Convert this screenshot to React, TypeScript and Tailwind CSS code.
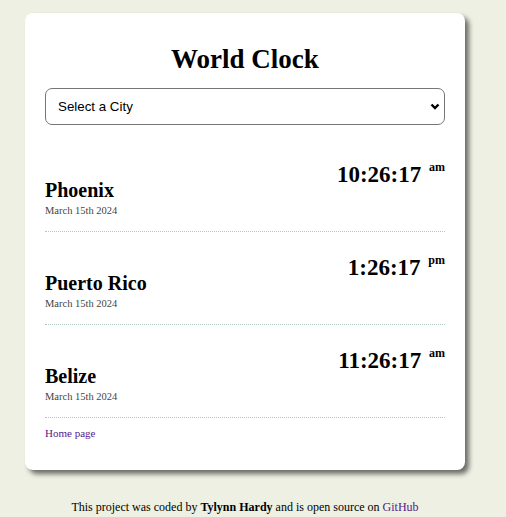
import React from 'react';

const cities = [
  { name: 'Phoenix', date: 'March 15th 2024', time: '10:26:17', period: 'am' },
  { name: 'Puerto Rico', date: 'March 15th 2024', time: '1:26:17', period: 'pm' },
  { name: 'Belize', date: 'March 15th 2024', time: '11:26:17', period: 'am' },
];

export default function App() {
  return (
    <div className="min-h-[517px] bg-[#edf0e2] pt-[13px] font-['Liberation_Serif',serif] text-black">
      <div className="ml-[25px] w-[440px] rounded-[8px] bg-white px-[20px] pb-[30px] pt-[30px] shadow-[4px_4px_5px_rgba(0,0,0,0.55)]">
        <h1 className="text-center text-[27px] font-bold leading-[32px]">World Clock</h1>
        <div className="relative mt-[13px] mb-[14px]">
          <select className="h-[37px] w-full appearance-none rounded-[7px] border border-[#767676] bg-white pl-[12px] font-['Liberation_Sans',Arial,sans-serif] text-[13.33px] text-black">
            <option>Select a City</option>
          </select>
          <svg
            className="pointer-events-none absolute right-[5px] top-[15px]"
            width="10"
            height="8"
            viewBox="0 0 10 8"
            fill="none"
          >
            <path d="M1.5 1.5 L5 5 L8.5 1.5" stroke="#000" strokeWidth="2.4" />
          </svg>
        </div>

        {cities.map((city) => (
          <div
            key={city.name}
            className="flex items-start justify-between border-b border-dotted border-[#b3c9c0] pt-[24px] pb-[13px]"
          >
            <div className="mt-[15px]">
              <h2 className="text-[20px] font-bold leading-[24px]">{city.name}</h2>
              <div className="mt-[2px] text-[10.5px] leading-[14px] text-[#444]">{city.date}</div>
            </div>
            <div className="text-[23px] font-bold leading-[24px]">
              {city.time}{' '}
              <sup className="relative top-[-2px] ml-[2px] align-super text-[12px]">{city.period}</sup>
            </div>
          </div>
        ))}

        <a href="#" className="mt-[8px] block text-[11px] leading-[14px] text-[#551a8b]">
          Home page
        </a>
      </div>

      <p className="mt-[29px] ml-[25px] w-[440px] text-center text-[12px] leading-[16px]">
        This project was coded by <strong>Tylynn Hardy</strong> and is open source on{' '}
        <a href="#" className="text-[#551a8b]">
          GitHub
        </a>
      </p>
    </div>
  );
}
